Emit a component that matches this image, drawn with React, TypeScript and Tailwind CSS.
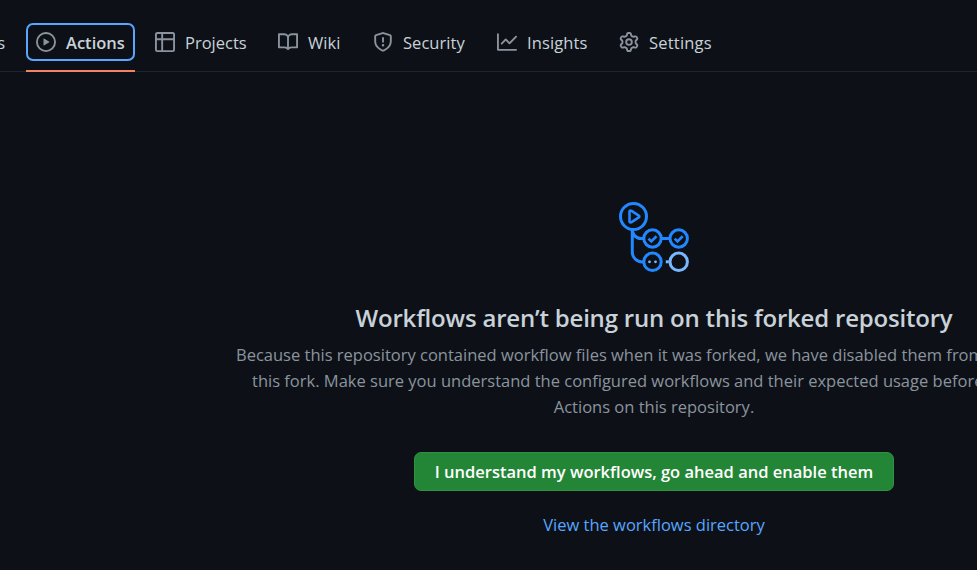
function Octicon({ d }: { d: string }) {
  return (
    <svg viewBox="0 0 16 16" className="size-5 shrink-0" fill="currentColor" fillRule="evenodd" aria-hidden="true">
      <path d={d} />
    </svg>
  );
}

const icons = {
  play: "M1.5 8a6.5 6.5 0 1113 0 6.5 6.5 0 01-13 0zM8 0a8 8 0 100 16A8 8 0 008 0zM6.379 5.227A.25.25 0 006 5.442v5.117a.25.25 0 00.379.214l4.264-2.559a.25.25 0 000-.428L6.379 5.227z",
  table:
    "M0 1.75C0 .784.784 0 1.75 0h12.5C15.216 0 16 .784 16 1.75v12.5A1.75 1.75 0 0114.25 16H1.75A1.75 1.75 0 010 14.25V1.75zM1.5 6.5v7.75c0 .138.112.25.25.25H5v-8H1.5zM6.5 6.5v8h7.75a.25.25 0 00.25-.25V6.5h-8zM14.5 5V1.75a.25.25 0 00-.25-.25H6.5V5h8zM5 5V1.5H1.75a.25.25 0 00-.25.25V5H5z",
  book: "M0 1.75A.75.75 0 01.75 1h4.253c1.227 0 2.317.59 3 1.501A3.744 3.744 0 0111.006 1h4.245a.75.75 0 01.75.75v10.5a.75.75 0 01-.75.75h-4.507a2.25 2.25 0 00-1.591.659l-.622.621a.75.75 0 01-1.06 0l-.622-.621A2.25 2.25 0 005.258 13H.75a.75.75 0 01-.75-.75V1.75zm8.755 3a2.25 2.25 0 012.25-2.25H14.5v9h-3.757c-.71 0-1.4.201-1.992.572l.004-7.322zm-1.504 7.324l.004-5.073-.002-2.253A2.25 2.25 0 005.003 2.5H1.5v9h3.757a3.75 3.75 0 011.994.574z",
  shield:
    "M7.467.133a1.75 1.75 0 011.066 0l5.25 1.68A1.75 1.75 0 0115 3.48V7c0 1.566-.32 3.182-1.303 4.682-.983 1.498-2.585 2.813-5.032 3.855a1.7 1.7 0 01-1.33 0c-2.447-1.042-4.049-2.357-5.032-3.855C1.32 10.182 1 8.566 1 7V3.48a1.75 1.75 0 011.217-1.667l5.25-1.68zm.61 1.429a.25.25 0 00-.153 0l-5.25 1.68a.25.25 0 00-.174.238V7c0 1.358.275 2.666 1.057 3.86.784 1.194 2.121 2.34 4.366 3.297a.2.2 0 00.154 0c2.245-.956 3.582-2.104 4.366-3.298C13.225 9.666 13.5 8.36 13.5 7V3.48a.25.25 0 00-.174-.237l-5.25-1.68zM9 10.5a1 1 0 11-2 0 1 1 0 012 0zm-.25-5.75a.75.75 0 10-1.5 0v3a.75.75 0 001.5 0v-3z",
  graph:
    "M1.5 1.75a.75.75 0 00-1.5 0v12.5c0 .414.336.75.75.75h14.5a.75.75 0 000-1.5H1.5V1.75zm14.28 2.53a.75.75 0 00-1.06-1.06L10 7.94 7.53 5.47a.75.75 0 00-1.06 0L3.22 8.72a.75.75 0 001.06 1.06L7 7.06l2.47 2.47a.75.75 0 001.06 0l5.25-5.25z",
  gear: "M7.429 1.525a6.593 6.593 0 011.142 0c.036.003.108.036.137.146l.289 1.105c.147.56.55.967.997 1.189.174.086.341.183.501.29.417.278.97.423 1.53.27l1.102-.303c.11-.03.175.016.195.046.219.31.41.641.573.989.014.031.022.11-.059.19l-.815.806c-.411.406-.562.957-.53 1.456a4.588 4.588 0 010 .582c-.032.499.119 1.05.53 1.456l.815.806c.08.08.073.159.059.19a6.494 6.494 0 01-.573.99c-.02.029-.086.074-.195.045l-1.103-.303c-.559-.153-1.112-.008-1.529.27-.16.107-.327.204-.5.29-.449.222-.851.628-.998 1.189l-.289 1.105c-.029.11-.101.143-.137.146a6.613 6.613 0 01-1.142 0c-.036-.003-.108-.037-.137-.146l-.289-1.105c-.147-.56-.55-.967-.997-1.189a4.502 4.502 0 01-.501-.29c-.417-.278-.97-.423-1.53-.27l-1.102.303c-.11.03-.175-.016-.195-.046a6.492 6.492 0 01-.573-.989c-.014-.031-.022-.11.059-.19l.815-.806c.411-.406.562-.957.53-1.456a4.587 4.587 0 010-.582c.032-.499-.119-1.05-.53-1.456l-.815-.806c-.08-.08-.073-.159-.059-.19a6.44 6.44 0 01.573-.99c.02-.029.086-.075.195-.045l1.103.303c.559.153 1.112.008 1.529-.27.16-.107.327-.204.5-.29.449-.222.851-.628.998-1.189l.289-1.105c.029-.11.101-.143.137-.146zM8 0c-.236 0-.47.01-.701.03-.743.065-1.29.615-1.458 1.261l-.29 1.106c-.017.066-.078.158-.211.224a5.994 5.994 0 00-.668.386c-.123.082-.233.09-.3.071L3.27 2.776c-.644-.177-1.392.02-1.82.63a7.977 7.977 0 00-.704 1.217c-.315.675-.111 1.422.363 1.891l.815.806c.05.048.098.147.088.294a6.084 6.084 0 000 .772c.01.147-.038.246-.088.294l-.815.806c-.474.469-.678 1.216-.363 1.891.2.428.436.835.704 1.218.428.609 1.176.806 1.82.63l1.103-.303c.066-.019.176-.011.299.071.213.143.436.272.668.386.133.066.194.158.212.224l.289 1.106c.169.646.715 1.196 1.458 1.26a8.094 8.094 0 001.402 0c.743-.064 1.29-.614 1.458-1.26l.29-1.106c.017-.066.078-.158.211-.224a5.98 5.98 0 00.668-.386c.123-.082.233-.09.3-.071l1.102.302c.644.177 1.392-.02 1.82-.63.268-.382.505-.789.704-1.217.315-.675.111-1.422-.364-1.891l-.814-.806c-.05-.048-.098-.147-.088-.294a6.1 6.1 0 000-.772c-.01-.147.039-.246.088-.294l.814-.806c.475-.469.679-1.216.364-1.891a7.992 7.992 0 00-.704-1.218c-.428-.609-1.176-.806-1.82-.63l-1.103.303c-.066.019-.176.011-.299-.071a5.991 5.991 0 00-.668-.386c-.133-.066-.194-.158-.212-.224L10.16 1.29C9.99.645 9.444.095 8.701.031A8.094 8.094 0 008 0zm1.5 8a1.5 1.5 0 11-3 0 1.5 1.5 0 013 0zM11 8a3 3 0 11-6 0 3 3 0 016 0z",
};

function Tab({ icon, label, className }: { icon: string; label: string; className: string }) {
  return (
    <a className={`flex h-[38px] shrink-0 items-center gap-[10px] pl-[10px] ${className}`}>
      <span className="text-[#8b949e]">
        <Octicon d={icon} />
      </span>
      <span className="pt-[2px]">{label}</span>
    </a>
  );
}

function WorkflowArt() {
  return (
    <svg width="72" height="72" viewBox="618 201 72 72" fill="none" stroke="#2188ff" strokeWidth="3" className="mx-auto" aria-hidden="true">
      <circle cx="633.5" cy="216.5" r="13" />
      <path d="M629.5 211.6v9.8c0 .9 1 1.4 1.7.9l7.6-4.9c.7-.4.7-1.4 0-1.8l-7.600-4.900c-.7-.5-1.700 0-1.700.9z" strokeWidth="2.6" strokeLinejoin="round" />
      <path d="M632.3 229.5v22.500c0 5.500 4.300 10 9.800 10h2M632.300 229.500c0 5 3.700 9 8.700 9h2.500M661.500 238.500h8" />
      <circle cx="652.5" cy="238.5" r="8.700" />
      <circle cx="678.7" cy="238.5" r="8.700" />
      <circle cx="652.5" cy="261.8" r="8.700" />
      <circle cx="678.7" cy="261.8" r="8.700" stroke="#79b8ff" />
      <path d="M665.8 261.8h3" stroke="#79b8ff" />
      <path d="M648.5 238.600l2.800 2.800 5.200-5.200M674.700 238.600l2.800 2.800 5.200-5.200" strokeWidth="2.700" />
      <g fill="#79b8ff" stroke="none">
        <circle cx="649.5" cy="261.8" r="1.4" />
        <circle cx="655.5" cy="261.8" r="1.4" />
      </g>
    </svg>
  );
}

export default function App() {
  return (
    <div className="h-[570px] w-full overflow-hidden bg-[#0d1117] font-['Open_Sans','Noto_Sans',sans-serif] text-[16.5px] whitespace-nowrap text-[#c9d1d9]">
      <header className="h-[72px] border-b border-[#21262d] pt-[23px]">
        <nav className="flex h-[49px] gap-[10px]">
          <span className="-mr-[10px] flex h-[38px] w-[26px] items-center justify-end pt-[2px] pr-[21px]">Issues</span>
          <div className="flex h-[49px] w-[109px] shrink-0 flex-col justify-between border-b-2 border-[#f78166]">
            <Tab
              icon={icons.play}
              label="Actions"
              className="w-[109px] rounded-[7px] font-semibold shadow-[inset_0_0_0_2px_#58a6ff]"
            />
          </div>
          <Tab icon={icons.table} label="Projects" className="w-[113px]" />
          <Tab icon={icons.book} label="Wiki" className="w-[85px] tracking-[0.1px]" />
          <Tab icon={icons.shield} label="Security" className="w-[114px] tracking-[0.05px]" />
          <Tab icon={icons.graph} label="Insights" className="w-[112px] tracking-[0.1px]" />
          <Tab icon={icons.gear} label="Settings" className="w-[112px] tracking-[0.2px]" />
        </nav>
      </header>
      <main className="w-[1308px] pt-[129px] text-center">
        <WorkflowArt />
        <h1 className="mt-[26px] text-[24px] leading-[38px] font-semibold tracking-[-0.2px]">
          Workflows aren’t being run on this forked repository
        </h1>
        <div className="mt-[5px] leading-[26px] text-[#8b949e]">
          <p className="mx-auto w-[836px] text-left">
            Because this repository contained workflow files when it was forked, we have disabled them from running on
          </p>
          <p className="mx-auto w-[804px] text-left">
            this fork. Make sure you understand the configured workflows and their expected usage before enabling GitHub
          </p>
          <p>Actions on this repository.</p>
        </div>
        <button className="mt-[32px] h-[39px] w-[480px] rounded-[7px] border border-[#2f9142] bg-[#238636] pt-[2px] font-semibold text-white">
          I understand my workflows, go ahead and enable them
        </button>
        <div className="mt-[21px] leading-[26px]">
          <a className="text-[#58a6ff]">View the workflows directory</a>
        </div>
      </main>
    </div>
  );
}
